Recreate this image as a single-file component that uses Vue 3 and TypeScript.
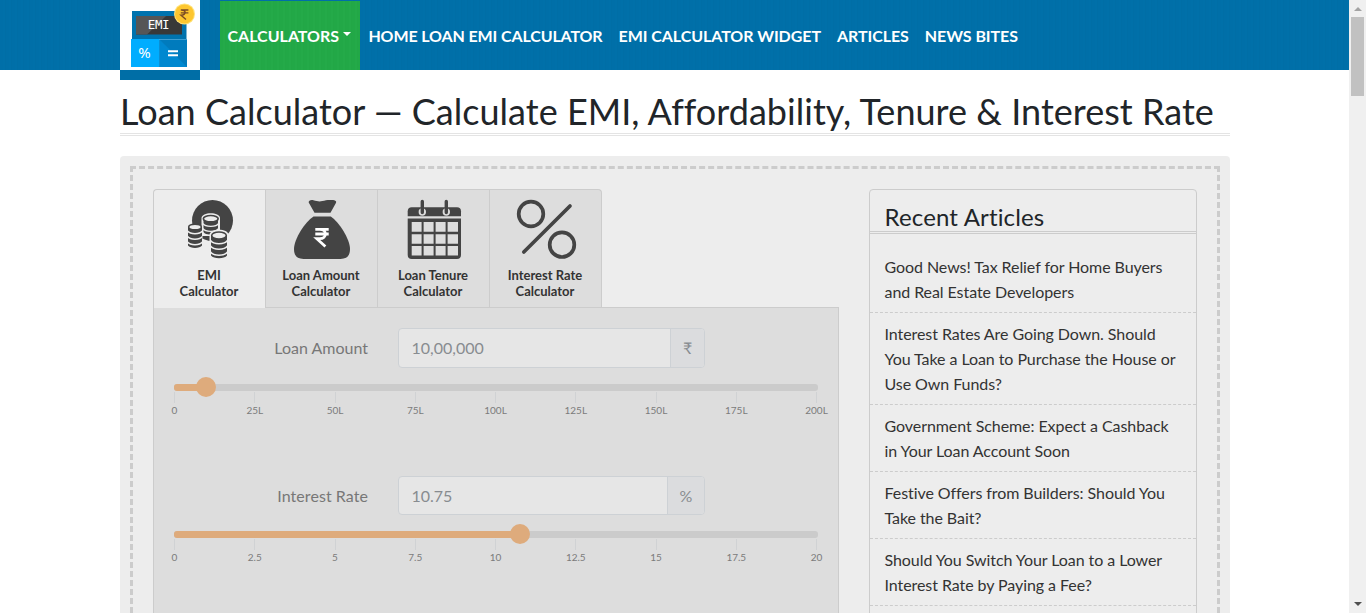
<script setup lang="ts">
interface Slider {
  label: string
  value: string
  unit: string
  percent: number
  ticks: string[]
}

const navLinks: string[] = ['HOME LOAN EMI CALCULATOR', 'EMI CALCULATOR WIDGET', 'ARTICLES', 'NEWS BITES']

const tabs: { icon: string; name: string }[] = [
  { icon: 'coins', name: 'EMI' },
  { icon: 'bag', name: 'Loan Amount' },
  { icon: 'calendar', name: 'Loan Tenure' },
  { icon: 'percent', name: 'Interest Rate' },
]

const sliders: Slider[] = [
  {
    label: 'Loan Amount',
    value: '10,00,000',
    unit: '₹',
    percent: 5,
    ticks: ['0', '25L', '50L', '75L', '100L', '125L', '150L', '175L', '200L'],
  },
  {
    label: 'Interest Rate',
    value: '10.75',
    unit: '%',
    percent: 53.75,
    ticks: ['0', '2.5', '5', '7.5', '10', '12.5', '15', '17.5', '20'],
  },
]

const articles: string[][] = [
  ['Good News! Tax Relief for Home Buyers', 'and Real Estate Developers'],
  ['Interest Rates Are Going Down. Should', 'You Take a Loan to Purchase the House or', 'Use Own Funds?'],
  ['Government Scheme: Expect a Cashback', 'in Your Loan Account Soon'],
  ['Festive Offers from Builders: Should You', 'Take the Bait?'],
  ['Should You Switch Your Loan to a Lower', 'Interest Rate by Paying a Fee?'],
]
</script>

<template>
  <div class="window">
    <div class="page">
      <header class="header">
        <div class="logo">
          <svg width="80" height="70" viewBox="0 0 80 70">
            <rect x="12" y="11" width="54.500" height="28" fill="#0073ae" />
            <rect x="16" y="16" width="46" height="18.500" fill="#383838" />
            <path d="M16 16h30L27 34.500H16z" fill="#565656" />
            <rect x="11" y="39" width="28.500" height="28" fill="#00adff" />
            <rect x="39.300" y="39.500" width="27.700" height="27.500" fill="#0088d0" />
            <path d="M39.300 39.500L67 67H39.300z" fill="#007bbd" transform="matrix(-1 0 0 1 106.300 0)" />
            <path d="M39.300 39.500L67 67V39.500z" fill="#007bbd" />
            <path d="M39.300 39.500L67 67H39.300z" fill="#0088d0" />
            <text x="38.500" y="29.300" class="logo-emi">EMI</text>
            <text x="24.500" y="57.500" class="logo-pct">%</text>
            <path d="M48 51.200h10M48 55.200h10" stroke="#fff" stroke-width="1.900" />
            <circle cx="64.500" cy="14" r="10.500" fill="#ffe27a" />
            <circle cx="64.500" cy="14" r="9.500" fill="#fdc62f" />
            <path d="M60.800 10h7.600M60.800 12.900h7.600M61 10c5.500-.4 5.500 5.300 0 5.200l5 4.300" fill="none" stroke="#7a4a25" stroke-width="1.400" />
          </svg>
        </div>
        <nav class="nav">
          <a class="link active">CALCULATORS<i class="caret"></i></a>
          <a v-for="l in navLinks" :key="l" class="link">{{ l }}</a>
        </nav>
      </header>

      <main class="container">
        <h1 class="title"><span>Loan Calculator — Calculate EMI, Affordability, Tenure &amp; Interest Rate</span></h1>
        <div class="panel">
          <div class="stitched">
            <section class="calculator">
              <div class="tabs">
                <div v-for="(t, i) in tabs" :key="t.name" class="tab" :class="{ current: i === 0 }">
                  <svg v-if="t.icon === 'coins'" class="icon" width="60" height="60" viewBox="0 0 60 60">
                    <circle cx="33.500" cy="21.500" r="20.500" fill="#444" />
                    <path d="M22.500 19c0-6.500 18.500-6.500 18.500 0v13.500L31 37h-8.500z" fill="#ededed" />
                    <path d="M24.500 20v13c2 3 8 3 8 1.500l6.500-4V20z" fill="#444" />
                    <path d="M24 24.500c2 3.800 13.500 3.800 15.500 0M24 29.500c2 3.800 13.500 3.800 15.500 0" fill="none" stroke="#ededed" stroke-width="1.400" />
                    <ellipse cx="31.750" cy="19.700" rx="7.400" ry="3.200" fill="#ededed" stroke="#444" stroke-width="1.700" />
                    <path d="M30.500 36c0-7 19-7 19 0v22h-19z" fill="#ededed" />
                    <path d="M9 28v18.500c2 3.200 12 3.200 14 0V28zM32 37v19.500c2.500 3.600 13.500 3.600 16 0V37z" fill="#444" />
                    <path d="M8.500 32c3 3.500 12 3.500 15 0M8.500 37.500c3 3.500 12 3.500 15 0M8.500 43c3 3.500 12 3.500 15 0M31.500 41.500c3 4.200 14 4.200 17 0M31.500 47c3 4.200 14 4.200 17 0M31.500 53c3 4.200 14 4.200 17 0" fill="none" stroke="#ededed" stroke-width="1.500" />
                    <ellipse cx="16" cy="28" rx="6.300" ry="2.800" fill="#ededed" stroke="#444" stroke-width="1.500" />
                    <ellipse cx="40" cy="36.500" rx="7.300" ry="3.500" fill="#ededed" stroke="#444" stroke-width="1.600" />
                  </svg>
                  <svg v-else-if="t.icon === 'bag'" class="icon" width="60" height="60" viewBox="0 0 60 60">
                    <path d="M17.700 3.500c-.3-2 2-2.900 4.700-2.300 3.500.8 5.500 1.700 9 .8 3-.8 5.500-1.300 9.500-1 3.500.2 5 1.200 4 3L39.500 13.700h-16z" fill="#444" />
                    <path d="M22.500 17.500h17.300C48 23 59 40 59 50c0 6.500-3 9.900-9.500 9.900h-37C6 59.900 3 56.500 3 50 3 40 14 23 22.500 17.500z" fill="#444" />
                    <path d="M24.300 30.300h13.400M24.300 35h13.400M24.300 30.300h4.500c7.500 0 7.500 9.400 0 9.400h-3l8.600 7.800" fill="none" stroke="#fff" stroke-width="2.800" />
                  </svg>
                  <svg v-else-if="t.icon === 'calendar'" class="icon" width="60" height="60" viewBox="0 0 60 60">
                    <path d="M4.700 17.300v-5c0-2.500 1.500-4 4-4h45.300c2.500 0 4 1.500 4 4v5z" fill="#444" />
                    <path fill-rule="evenodd" d="M4.700 19.500H58V56c0 2.500-1.500 4-4 4H8.700c-2.500 0-4-1.500-4-4zM8.700 23v9.700h9.900V23zm11.900 0v9.700h10V23zm12 0v9.700h10V23zm12 0v9.700H55V23zM8.700 35.200v9.500h9.900v-9.500zm11.900 0v9.500h10v-9.500zm12 0v9.500h10v-9.500zm12 0v9.500H55v-9.500zM8.700 47v9.500h9.900V47zm11.900 0v9.500h10V47zm12 0v9.500h10V47zm12 0v9.500H55V47z" fill="#444" />
                    <circle cx="19.300" cy="13" r="3.700" fill="#ddd" />
                    <circle cx="43.300" cy="13" r="3.700" fill="#ddd" />
                    <path d="M19.300 2.500v11M43.300 2.500v11" stroke="#444" stroke-width="3.400" stroke-linecap="round" />
                  </svg>
                  <svg v-else class="icon" width="60" height="60" viewBox="0 0 60 60">
                    <g fill="none" stroke="#444" stroke-width="3.700" stroke-linecap="round">
                      <circle cx="16" cy="15" r="12.300" />
                      <circle cx="47" cy="45.700" r="12.300" />
                      <path d="M8.800 53L55 7" />
                    </g>
                  </svg>
                  <span>{{ t.name }}<br />Calculator</span>
                </div>
              </div>
              <div class="form">
                <div v-for="s in sliders" :key="s.label" class="field">
                  <div class="row">
                    <label class="label">{{ s.label }}</label>
                    <div class="group">
                      <div class="value">{{ s.value }}</div>
                      <div class="unit">{{ s.unit }}</div>
                    </div>
                  </div>
                  <div class="track">
                    <div class="range" :style="{ width: s.percent + '%' }"></div>
                    <div class="knob" :style="{ left: s.percent + '%' }"></div>
                  </div>
                  <div class="scale">
                    <div v-for="t in s.ticks" :key="t" class="tick"><span>{{ t }}</span></div>
                  </div>
                </div>
              </div>
            </section>

            <aside class="articles">
              <h2>Recent Articles</h2>
              <ul>
                <li v-for="a in articles" :key="a[0]">
                  <span v-for="line in a" :key="line">{{ line }}</span>
                </li>
              </ul>
            </aside>
          </div>
        </div>
      </main>
    </div>

    <div class="scrollbar">
      <svg width="17" height="17" viewBox="0 0 17 17"><path d="M5 11l4-4 4 4z" fill="#a3a3a3" /></svg>
      <div class="thumb"></div>
      <svg class="down" width="17" height="17" viewBox="0 0 17 17"><path d="M5 6h8l-4 4z" fill="#505050" /></svg>
    </div>
  </div>
</template>

<style>
html,
body {
  margin: 0;
  overflow: hidden;
}
</style>

<style scoped>
.window {
  display: flex;
  width: 1366px;
  height: 613px;
  overflow: hidden;
  background: #fff;
  color: #212529;
  font-family: Lato, 'Liberation Sans', sans-serif;
  font-size: 16px;
  font-variant-ligatures: none;
}
.page {
  width: 1349px;
  height: 613px;
  overflow: hidden;
}
.header {
  display: flex;
  height: 70px;
  padding-left: 120px;
  background: repeating-linear-gradient(90deg, #006fa8 0 3px, #0070a9 3px 5px, #006ea6 5px 6px);
}
.logo {
  width: 80px;
  height: 70px;
  background: #fff;
  border-bottom: 10px solid #006ea6;
}
.logo svg {
  display: block;
}
.logo-emi {
  font: 12.500px 'DejaVu Sans Mono', monospace;
  fill: #fff;
  text-anchor: middle;
  letter-spacing: -0.4px;
}
.logo-pct {
  font: 15px 'Noto Sans', sans-serif;
  fill: #fff;
  text-anchor: middle;
}
.nav {
  display: flex;
  margin-left: 20px;
}
.link {
  display: flex;
  align-items: center;
  height: 70px;
  padding: 1px 8px 0;
  box-sizing: border-box;
  color: #fff;
  font-size: 16px;
  font-weight: 700;
  letter-spacing: -0.120px;
  white-space: nowrap;
}
.link + .link + .link {
  letter-spacing: -0.060px;
}
.active {
  width: 140px;
  height: 69px;
  margin-top: 1px;
  margin-right: 0.400px;
  padding: 0 7.500px;
  background: repeating-linear-gradient(90deg, #22a847 0 3px, #24aa49 3px 5px, #22a746 5px 6px);
  letter-spacing: 0;
}
.caret {
  margin-left: 4px;
  margin-top: -3px;
  border: 4.800px solid transparent;
  border-top-color: #fff;
  border-bottom: 0;
}
.container {
  width: 1110px;
  margin-left: 120px;
}
.title {
  height: 42px;
  margin: 21px 0 20px;
  border-bottom: 3px double #e4e4e4;
  font-size: 36px;
  font-weight: 400;
  line-height: 40px;
  letter-spacing: 0.030px;
  white-space: nowrap;
}
.panel {
  height: 1000px;
  padding: 10px;
  box-sizing: border-box;
  border-radius: 4px;
  background: #ededed;
}
.stitched {
  display: flex;
  justify-content: space-between;
  height: 960px;
  padding: 20px;
  box-sizing: border-box;
  border: 3px dashed #ccc;
}
.calculator {
  width: 686px;
}
.tabs {
  display: flex;
  width: 449px;
  height: 118px;
}
.tab {
  display: flex;
  flex-direction: column;
  align-items: center;
  width: 112px;
  box-sizing: border-box;
  height: 118px;
  padding: 9px 1px 0 0;
  border: 1px solid #ccc;
  border-width: 1px 0 0 1px;
  background: #ddd;
  color: #333;
  font-size: 13px;
  font-weight: 700;
  line-height: 16px;
  text-align: center;
}
.tab:first-child {
  border-top-left-radius: 4px;
}
.tab:last-child {
  width: 113px;
  border-right-width: 1px;
  border-top-right-radius: 4px;
}
.current {
  height: 119px;
  background: #ededed;
  position: relative;
}
.icon {
  display: block;
  flex: none;
  margin: 0 1px 8px 0;
  overflow: visible;
}
.form {
  height: 700px;
  padding: 20px;
  box-sizing: border-box;
  border: 1px solid #ccc;
  background: #ddd;
}
.field {
  height: 147.500px;
}
.row {
  display: flex;
  align-items: center;
}
.label {
  width: 194px;
  height: 21px;
  color: #777;
  line-height: 19px;
  text-align: right;
}
.field + .field .label {
  line-height: 21px;
  letter-spacing: 0.060px;
}
.group {
  display: flex;
  width: 307px;
  height: 40px;
  margin-left: 30px;
  box-sizing: border-box;
  border: 1px solid #cdd1d5;
  border-radius: 4px;
  background: #e6e6e6;
  color: #888c90;
  line-height: 38px;
  overflow: hidden;
}
.field + .field .group {
  height: 39px;
}
.value {
  flex: 1;
  padding-left: 12.500px;
}
.unit {
  padding: 0 11.800px;
  border-left: 1px solid #cdd1d5;
  background: #dbdcde;
}
.track {
  position: relative;
  height: 7px;
  margin-top: 16px;
  border-radius: 3px;
  background: #cbcbcb;
}
.range {
  height: 7px;
  border-radius: 3px 0 0 3px;
  background: #deab7c;
}
.knob {
  position: absolute;
  top: -7px;
  width: 20px;
  height: 20px;
  margin-left: -10px;
  border-radius: 50%;
  background: #deab7c;
}
.scale {
  display: flex;
  justify-content: space-between;
  width: 643px;
  margin-top: 1px;
}
.tick {
  display: flex;
  justify-content: center;
  width: 1px;
  height: 11px;
  background: #d0d2d4;
}
.tick span {
  margin-top: 11px;
  color: #7b7b7b;
  font-size: 10px;
  line-height: 14px;
  white-space: nowrap;
}
.articles {
  width: 328px;
  height: 900px;
  box-sizing: border-box;
  border: 1px solid #ccc;
  border-radius: 4px;
}
.articles h2 {
  height: 30px;
  margin: 0;
  padding: 11px 14.500px 0;
  border-bottom: 3px double #ccc;
  font-size: 24px;
  font-weight: 400;
  line-height: 31px;
  letter-spacing: 0.160px;
}
.articles ul {
  margin: 12px 0 0;
  padding: 0;
  list-style: none;
}
.articles li {
  padding: 8px 0 8px 14.500px;
  border-bottom: 1px dashed #ccc;
  color: #333;
  line-height: 25px;
  letter-spacing: -0.070px;
}
.articles li span {
  display: block;
  white-space: nowrap;
}
.scrollbar {
  display: flex;
  flex-direction: column;
  width: 17px;
  height: 613px;
  background: #f0f0f0;
}
.thumb {
  width: 13px;
  height: 79px;
  margin-left: 2px;
  background: #c1c1c1;
}
.down {
  margin-top: auto;
}
</style>
